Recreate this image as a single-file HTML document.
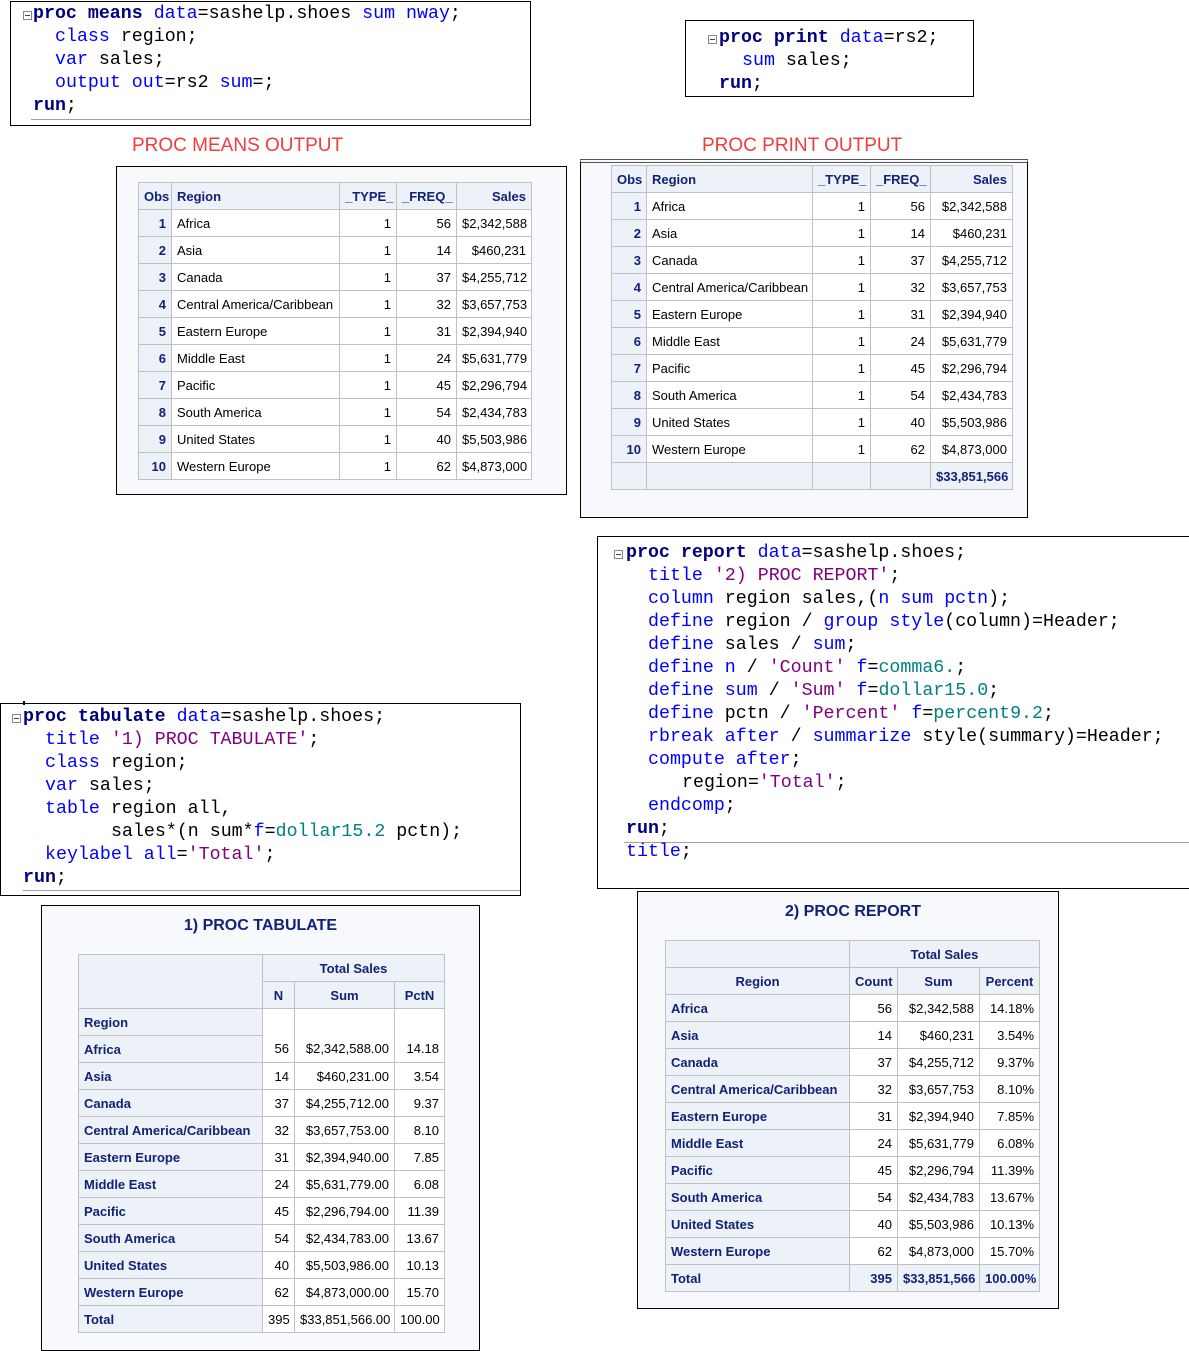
<!DOCTYPE html>
<html><head><meta charset="utf-8"><style>
body{margin:0;width:1189px;height:1351px;position:relative;background:#fff;overflow:hidden}
.code{position:absolute;border:1px solid #000;background:#fff;font-family:"Liberation Mono",monospace;font-size:18.3px;line-height:23px;white-space:pre;color:#000}
.code .l{position:absolute;left:0}
.k{color:#000080;font-weight:bold}
.b{color:#0000ff}
.s{color:#800080}
.t{color:#008080}
.fold{display:inline-block;width:7px;height:7px;border:1px solid #888;position:absolute;font-size:0}
.fold:after{content:"";position:absolute;left:1px;top:3px;width:5px;height:1px;background:#444}
.uline{position:absolute;height:1px;background:#a0a0a0}
.red{position:absolute;color:#f03c3c;font-family:"Liberation Sans",Arial,sans-serif;font-size:19px}
.box{position:absolute;border:1px solid #000;background:#f8f9fd}
table{position:absolute;border-collapse:collapse;table-layout:fixed;font-family:"Liberation Sans",Arial,sans-serif;font-size:13px}
td,th{border:1px solid #c1c1c1;padding:0 5px;white-space:nowrap;overflow:hidden}
tr{height:27px}
th,.h{background:#edf2f9;color:#112277;font-weight:bold}
td{background:#fff;color:#000}
.r{text-align:right}.c{text-align:center}.lft{text-align:left}
.ttl{position:absolute;font-family:"Liberation Sans",Arial,sans-serif;font-weight:bold;font-size:16px;color:#112277}
</style></head><body>

<div class="code" style="left:10px;top:1px;width:519px;height:123px">
<span class="fold" style="left:12px;top:9px"></span>
<div class="l" style="left:22px;top:1px"><span class="k">proc means</span> <span class="b">data</span>=sashelp.shoes <span class="b">sum nway</span>;</div>
<div class="l" style="left:44px;top:24px"><span class="b">class</span> region;</div>
<div class="l" style="left:44px;top:47px"><span class="b">var</span> sales;</div>
<div class="l" style="left:44px;top:70px"><span class="b">output out</span>=rs2 <span class="b">sum</span>=;</div>
<div class="l" style="left:22px;top:93px"><span class="k">run</span>;</div>
<div class="uline" style="left:20px;top:117px;width:499px"></div>
</div>

<div class="code" style="left:685px;top:20px;width:287px;height:75px">
<span class="fold" style="left:22px;top:14px"></span>
<div class="l" style="left:33px;top:6px"><span class="k">proc print</span> <span class="b">data</span>=rs2;</div>
<div class="l" style="left:56px;top:29px"><span class="b">sum</span> sales;</div>
<div class="l" style="left:33px;top:52px"><span class="k">run</span>;</div>
</div>

<div class="red" style="left:132px;top:135px">PROC MEANS OUTPUT</div>
<div class="red" style="left:702px;top:135px">PROC PRINT OUTPUT</div>

<div class="box" style="left:116px;top:166px;width:449px;height:327px"></div>
<table style="left:138px;top:182px;width:393px">
<colgroup><col style="width:33px"><col style="width:168px"><col style="width:57px"><col style="width:60px"><col style="width:75px"></colgroup>
<tr><th class="r">Obs</th><th class="lft">Region</th><th class="r">_TYPE_</th><th class="r">_FREQ_</th><th class="r">Sales</th></tr>
<tr><td class="h r">1</td><td>Africa</td><td class="r">1</td><td class="r">56</td><td class="r">$2,342,588</td></tr>
<tr><td class="h r">2</td><td>Asia</td><td class="r">1</td><td class="r">14</td><td class="r">$460,231</td></tr>
<tr><td class="h r">3</td><td>Canada</td><td class="r">1</td><td class="r">37</td><td class="r">$4,255,712</td></tr>
<tr><td class="h r">4</td><td>Central America/Caribbean</td><td class="r">1</td><td class="r">32</td><td class="r">$3,657,753</td></tr>
<tr><td class="h r">5</td><td>Eastern Europe</td><td class="r">1</td><td class="r">31</td><td class="r">$2,394,940</td></tr>
<tr><td class="h r">6</td><td>Middle East</td><td class="r">1</td><td class="r">24</td><td class="r">$5,631,779</td></tr>
<tr><td class="h r">7</td><td>Pacific</td><td class="r">1</td><td class="r">45</td><td class="r">$2,296,794</td></tr>
<tr><td class="h r">8</td><td>South America</td><td class="r">1</td><td class="r">54</td><td class="r">$2,434,783</td></tr>
<tr><td class="h r">9</td><td>United States</td><td class="r">1</td><td class="r">40</td><td class="r">$5,503,986</td></tr>
<tr><td class="h r">10</td><td>Western Europe</td><td class="r">1</td><td class="r">62</td><td class="r">$4,873,000</td></tr>
</table>

<div class="box" style="left:580px;top:159px;width:446px;height:354px;border-top:4px double #555"></div>
<table style="left:611px;top:165px;width:402px">
<colgroup><col style="width:35px"><col style="width:166px"><col style="width:58px"><col style="width:60px"><col style="width:82px"></colgroup>
<tr><th class="r">Obs</th><th class="lft">Region</th><th class="r">_TYPE_</th><th class="r">_FREQ_</th><th class="r">Sales</th></tr>
<tr><td class="h r">1</td><td>Africa</td><td class="r">1</td><td class="r">56</td><td class="r">$2,342,588</td></tr>
<tr><td class="h r">2</td><td>Asia</td><td class="r">1</td><td class="r">14</td><td class="r">$460,231</td></tr>
<tr><td class="h r">3</td><td>Canada</td><td class="r">1</td><td class="r">37</td><td class="r">$4,255,712</td></tr>
<tr><td class="h r">4</td><td>Central America/Caribbean</td><td class="r">1</td><td class="r">32</td><td class="r">$3,657,753</td></tr>
<tr><td class="h r">5</td><td>Eastern Europe</td><td class="r">1</td><td class="r">31</td><td class="r">$2,394,940</td></tr>
<tr><td class="h r">6</td><td>Middle East</td><td class="r">1</td><td class="r">24</td><td class="r">$5,631,779</td></tr>
<tr><td class="h r">7</td><td>Pacific</td><td class="r">1</td><td class="r">45</td><td class="r">$2,296,794</td></tr>
<tr><td class="h r">8</td><td>South America</td><td class="r">1</td><td class="r">54</td><td class="r">$2,434,783</td></tr>
<tr><td class="h r">9</td><td>United States</td><td class="r">1</td><td class="r">40</td><td class="r">$5,503,986</td></tr>
<tr><td class="h r">10</td><td>Western Europe</td><td class="r">1</td><td class="r">62</td><td class="r">$4,873,000</td></tr>
<tr><td class="h"></td><td class="h"></td><td class="h"></td><td class="h"></td><td class="h r">$33,851,566</td></tr>
</table>

<div class="code" style="left:597px;top:536px;width:591px;height:351px">
<span class="fold" style="left:16px;top:13px"></span>
<div class="l" style="left:28px;top:5px"><span class="k">proc report</span> <span class="b">data</span>=sashelp.shoes;</div>
<div class="l" style="left:50px;top:28px"><span class="b">title</span> <span class="s">'2) PROC REPORT'</span>;</div>
<div class="l" style="left:50px;top:51px"><span class="b">column</span> region sales,(<span class="b">n sum pctn</span>);</div>
<div class="l" style="left:50px;top:74px"><span class="b">define</span> region / <span class="b">group style</span>(column)=Header;</div>
<div class="l" style="left:50px;top:97px"><span class="b">define</span> sales / <span class="b">sum</span>;</div>
<div class="l" style="left:50px;top:120px"><span class="b">define n</span> / <span class="s">'Count'</span> <span class="b">f</span>=<span class="t">comma6.</span>;</div>
<div class="l" style="left:50px;top:143px"><span class="b">define sum</span> / <span class="s">'Sum'</span> <span class="b">f</span>=<span class="t">dollar15.0</span>;</div>
<div class="l" style="left:50px;top:166px"><span class="b">define</span> pctn / <span class="s">'Percent'</span> <span class="b">f</span>=<span class="t">percent9.2</span>;</div>
<div class="l" style="left:50px;top:189px"><span class="b">rbreak after</span> / <span class="b">summarize</span> style(summary)=Header;</div>
<div class="l" style="left:50px;top:212px"><span class="b">compute after</span>;</div>
<div class="l" style="left:84px;top:235px">region=<span class="s">'Total'</span>;</div>
<div class="l" style="left:50px;top:258px"><span class="b">endcomp</span>;</div>
<div class="l" style="left:28px;top:281px"><span class="k">run</span>;</div>
<div class="uline" style="left:26px;top:305px;width:565px"></div>
<div class="l" style="left:28px;top:304px"><span class="b">title</span>;</div>
</div>

<div class="code" style="left:0px;top:703px;width:519px;height:191px">
<div style="position:absolute;left:22px;top:-3px;width:2px;height:4px;background:#000"></div>
<span class="fold" style="left:11px;top:10px"></span>
<div class="l" style="left:22px;top:2px"><span class="k">proc tabulate</span> <span class="b">data</span>=sashelp.shoes;</div>
<div class="l" style="left:44px;top:25px"><span class="b">title</span> <span class="s">'1) PROC TABULATE'</span>;</div>
<div class="l" style="left:44px;top:48px"><span class="b">class</span> region;</div>
<div class="l" style="left:44px;top:71px"><span class="b">var</span> sales;</div>
<div class="l" style="left:44px;top:94px"><span class="b">table</span> region all,</div>
<div class="l" style="left:110px;top:117px">sales*(n sum*<span class="b">f</span>=<span class="t">dollar15.2</span> pctn);</div>
<div class="l" style="left:44px;top:140px"><span class="b">keylabel all</span>=<span class="s">'Total'</span>;</div>
<div class="l" style="left:22px;top:163px"><span class="k">run</span>;</div>
<div class="uline" style="left:22px;top:186px;width:497px"></div>
</div>

<div class="box" style="left:41px;top:905px;width:437px;height:444px"></div>
<div class="ttl" style="left:41px;width:439px;text-align:center;top:917px">1) PROC TABULATE</div>
<table style="left:78px;top:954px;width:367px">
<colgroup><col style="width:184px"><col style="width:32px"><col style="width:100px"><col style="width:50px"></colgroup>
<tr><th rowspan="2"></th><th colspan="3" class="c">Total Sales</th></tr>
<tr><th class="c">N</th><th class="c">Sum</th><th class="c">PctN</th></tr>
<tr><th class="lft">Region</th><td rowspan="2" class="r" style="vertical-align:bottom;padding-bottom:6px">56</td><td rowspan="2" class="r" style="vertical-align:bottom;padding-bottom:6px">$2,342,588.00</td><td rowspan="2" class="r" style="vertical-align:bottom;padding-bottom:6px">14.18</td></tr>
<tr><th class="lft">Africa</th></tr>
<tr><th class="lft">Asia</th><td class="r">14</td><td class="r">$460,231.00</td><td class="r">3.54</td></tr>
<tr><th class="lft">Canada</th><td class="r">37</td><td class="r">$4,255,712.00</td><td class="r">9.37</td></tr>
<tr><th class="lft">Central America/Caribbean</th><td class="r">32</td><td class="r">$3,657,753.00</td><td class="r">8.10</td></tr>
<tr><th class="lft">Eastern Europe</th><td class="r">31</td><td class="r">$2,394,940.00</td><td class="r">7.85</td></tr>
<tr><th class="lft">Middle East</th><td class="r">24</td><td class="r">$5,631,779.00</td><td class="r">6.08</td></tr>
<tr><th class="lft">Pacific</th><td class="r">45</td><td class="r">$2,296,794.00</td><td class="r">11.39</td></tr>
<tr><th class="lft">South America</th><td class="r">54</td><td class="r">$2,434,783.00</td><td class="r">13.67</td></tr>
<tr><th class="lft">United States</th><td class="r">40</td><td class="r">$5,503,986.00</td><td class="r">10.13</td></tr>
<tr><th class="lft">Western Europe</th><td class="r">62</td><td class="r">$4,873,000.00</td><td class="r">15.70</td></tr>
<tr><th class="lft">Total</th><td class="r">395</td><td class="r">$33,851,566.00</td><td class="r">100.00</td></tr>
</table>

<div class="box" style="left:637px;top:891px;width:420px;height:416px"></div>
<div class="ttl" style="left:637px;width:432px;text-align:center;top:903px">2) PROC REPORT</div>
<table style="left:665px;top:940px;width:375px">
<colgroup><col style="width:184px"><col style="width:48px"><col style="width:82px"><col style="width:60px"></colgroup>
<tr><th></th><th colspan="3" class="c">Total Sales</th></tr>
<tr><th class="c">Region</th><th class="c">Count</th><th class="c">Sum</th><th class="c">Percent</th></tr>
<tr><th class="lft">Africa</th><td class="r">56</td><td class="r">$2,342,588</td><td class="r">14.18%</td></tr>
<tr><th class="lft">Asia</th><td class="r">14</td><td class="r">$460,231</td><td class="r">3.54%</td></tr>
<tr><th class="lft">Canada</th><td class="r">37</td><td class="r">$4,255,712</td><td class="r">9.37%</td></tr>
<tr><th class="lft">Central America/Caribbean</th><td class="r">32</td><td class="r">$3,657,753</td><td class="r">8.10%</td></tr>
<tr><th class="lft">Eastern Europe</th><td class="r">31</td><td class="r">$2,394,940</td><td class="r">7.85%</td></tr>
<tr><th class="lft">Middle East</th><td class="r">24</td><td class="r">$5,631,779</td><td class="r">6.08%</td></tr>
<tr><th class="lft">Pacific</th><td class="r">45</td><td class="r">$2,296,794</td><td class="r">11.39%</td></tr>
<tr><th class="lft">South America</th><td class="r">54</td><td class="r">$2,434,783</td><td class="r">13.67%</td></tr>
<tr><th class="lft">United States</th><td class="r">40</td><td class="r">$5,503,986</td><td class="r">10.13%</td></tr>
<tr><th class="lft">Western Europe</th><td class="r">62</td><td class="r">$4,873,000</td><td class="r">15.70%</td></tr>
<tr><th class="lft">Total</th><th class="r">395</th><th class="r">$33,851,566</th><th class="r">100.00%</th></tr>
</table>

</body></html>
